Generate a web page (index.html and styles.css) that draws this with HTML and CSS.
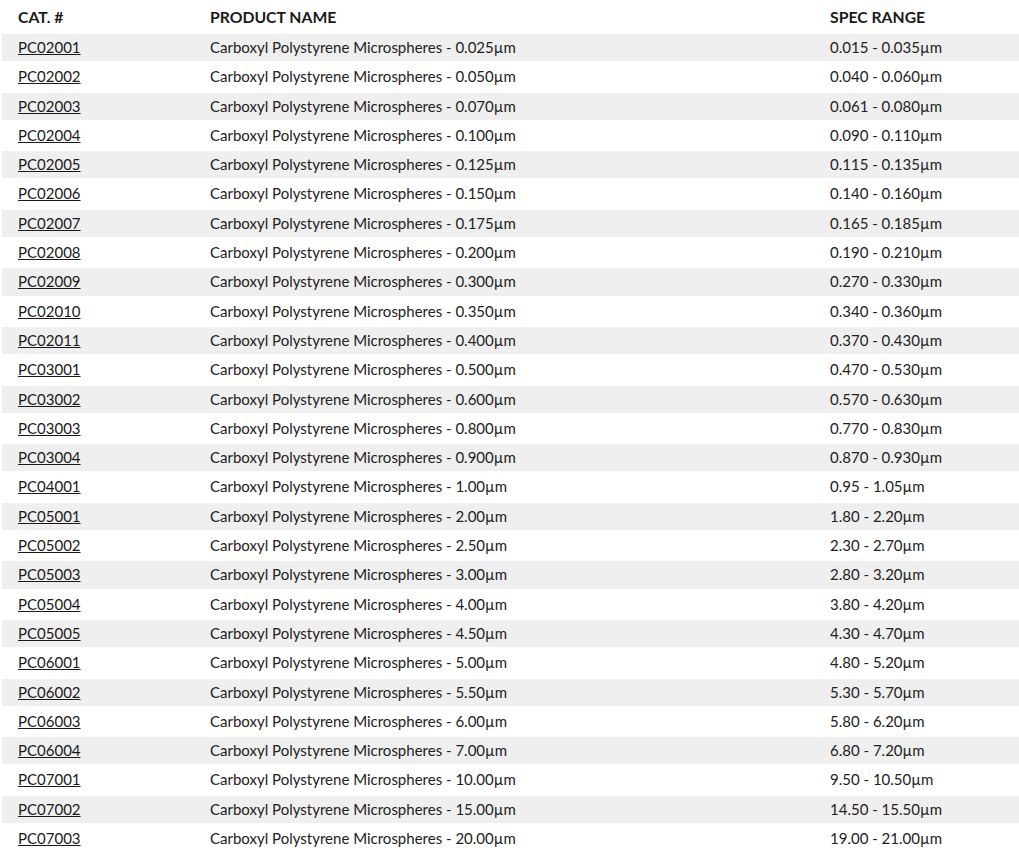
FILE: index.html
```html
<!DOCTYPE html>
<html>
<head>
<meta charset="utf-8">
<link rel="stylesheet" href="styles.css">
</head>
<body>
<table class="products">
  <thead>
    <tr><th class="c1">CAT. #</th><th class="c2">PRODUCT NAME</th><th class="c3">SPEC RANGE</th></tr>
  </thead>
  <tbody>
    <tr><td><a href="#">PC02001</a></td><td>Carboxyl Polystyrene Microspheres - 0.025µm</td><td>0.015 - 0.035µm</td></tr>
    <tr><td><a href="#">PC02002</a></td><td>Carboxyl Polystyrene Microspheres - 0.050µm</td><td>0.040 - 0.060µm</td></tr>
    <tr><td><a href="#">PC02003</a></td><td>Carboxyl Polystyrene Microspheres - 0.070µm</td><td>0.061 - 0.080µm</td></tr>
    <tr><td><a href="#">PC02004</a></td><td>Carboxyl Polystyrene Microspheres - 0.100µm</td><td>0.090 - 0.110µm</td></tr>
    <tr><td><a href="#">PC02005</a></td><td>Carboxyl Polystyrene Microspheres - 0.125µm</td><td>0.115 - 0.135µm</td></tr>
    <tr><td><a href="#">PC02006</a></td><td>Carboxyl Polystyrene Microspheres - 0.150µm</td><td>0.140 - 0.160µm</td></tr>
    <tr><td><a href="#">PC02007</a></td><td>Carboxyl Polystyrene Microspheres - 0.175µm</td><td>0.165 - 0.185µm</td></tr>
    <tr><td><a href="#">PC02008</a></td><td>Carboxyl Polystyrene Microspheres - 0.200µm</td><td>0.190 - 0.210µm</td></tr>
    <tr><td><a href="#">PC02009</a></td><td>Carboxyl Polystyrene Microspheres - 0.300µm</td><td>0.270 - 0.330µm</td></tr>
    <tr><td><a href="#">PC02010</a></td><td>Carboxyl Polystyrene Microspheres - 0.350µm</td><td>0.340 - 0.360µm</td></tr>
    <tr><td><a href="#">PC02011</a></td><td>Carboxyl Polystyrene Microspheres - 0.400µm</td><td>0.370 - 0.430µm</td></tr>
    <tr><td><a href="#">PC03001</a></td><td>Carboxyl Polystyrene Microspheres - 0.500µm</td><td>0.470 - 0.530µm</td></tr>
    <tr><td><a href="#">PC03002</a></td><td>Carboxyl Polystyrene Microspheres - 0.600µm</td><td>0.570 - 0.630µm</td></tr>
    <tr><td><a href="#">PC03003</a></td><td>Carboxyl Polystyrene Microspheres - 0.800µm</td><td>0.770 - 0.830µm</td></tr>
    <tr><td><a href="#">PC03004</a></td><td>Carboxyl Polystyrene Microspheres - 0.900µm</td><td>0.870 - 0.930µm</td></tr>
    <tr><td><a href="#">PC04001</a></td><td>Carboxyl Polystyrene Microspheres - 1.00µm</td><td>0.95 - 1.05µm</td></tr>
    <tr><td><a href="#">PC05001</a></td><td>Carboxyl Polystyrene Microspheres - 2.00µm</td><td>1.80 - 2.20µm</td></tr>
    <tr><td><a href="#">PC05002</a></td><td>Carboxyl Polystyrene Microspheres - 2.50µm</td><td>2.30 - 2.70µm</td></tr>
    <tr><td><a href="#">PC05003</a></td><td>Carboxyl Polystyrene Microspheres - 3.00µm</td><td>2.80 - 3.20µm</td></tr>
    <tr><td><a href="#">PC05004</a></td><td>Carboxyl Polystyrene Microspheres - 4.00µm</td><td>3.80 - 4.20µm</td></tr>
    <tr><td><a href="#">PC05005</a></td><td>Carboxyl Polystyrene Microspheres - 4.50µm</td><td>4.30 - 4.70µm</td></tr>
    <tr><td><a href="#">PC06001</a></td><td>Carboxyl Polystyrene Microspheres - 5.00µm</td><td>4.80 - 5.20µm</td></tr>
    <tr><td><a href="#">PC06002</a></td><td>Carboxyl Polystyrene Microspheres - 5.50µm</td><td>5.30 - 5.70µm</td></tr>
    <tr><td><a href="#">PC06003</a></td><td>Carboxyl Polystyrene Microspheres - 6.00µm</td><td>5.80 - 6.20µm</td></tr>
    <tr><td><a href="#">PC06004</a></td><td>Carboxyl Polystyrene Microspheres - 7.00µm</td><td>6.80 - 7.20µm</td></tr>
    <tr><td><a href="#">PC07001</a></td><td>Carboxyl Polystyrene Microspheres - 10.00µm</td><td>9.50 - 10.50µm</td></tr>
    <tr><td><a href="#">PC07002</a></td><td>Carboxyl Polystyrene Microspheres - 15.00µm</td><td>14.50 - 15.50µm</td></tr>
    <tr><td><a href="#">PC07003</a></td><td>Carboxyl Polystyrene Microspheres - 20.00µm</td><td>19.00 - 21.00µm</td></tr>
  </tbody>
</table>
</body>
</html>
```

FILE: styles.css
```css
html, body {
  margin: 0;
  padding: 0;
  background: #ffffff;
}

body {
  font-family: Lato, "Open Sans", sans-serif;
  color: #222222;
  overflow: hidden;
}

.products {
  border-collapse: separate;
  border-spacing: 0 2px;
  margin: 0 0 0 2px;
  width: 1017px;
  table-layout: fixed;
}

.products th {
  text-align: left;
  font-weight: 700;
  font-size: 15.75px;
  line-height: 30px;
  padding: 0 16px;
  color: #1a1a1a;
}

.products .c1 { width: 160px; }
.products .c2 { width: 588px; }

.products td {
  font-size: 15px;
  line-height: 27.3px;
  padding: 0 16px;
  white-space: nowrap;
}

.products tbody tr:nth-child(odd) td {
  background: #efefef;
}

.products a {
  color: #1a1a1a;
  text-decoration: underline;
}
```
